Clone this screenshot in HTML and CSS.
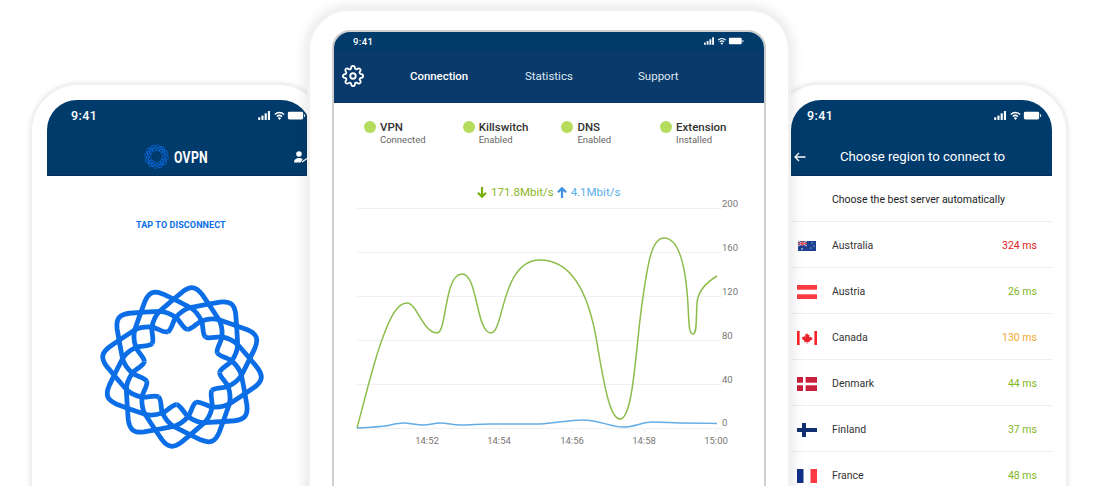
FILE: index.html
```html
<!DOCTYPE html>
<html lang="en">
<head>
<meta charset="utf-8">
<title>OVPN</title>
<link rel="stylesheet" href="styles.css">
</head>
<body>
<svg class="defs" width="0" height="0" aria-hidden="true">
  <defs>
    <path id="strand" d="M0 -80C4.500 -80 7 -77.500 10 -74.500C16 -68 24 -59 30 -52C33 -48 35 -42 35.400 -35.400C35.400 -30 31 -23 32.900 -19M0 -80C-4.500 -80 -7 -77.500 -10 -74.500C-16 -68 -24 -59 -30 -52C-33 -48 -35 -42 -35.400 -35.400C-35.400 -30 -31 -23 -32.900 -19"/>
    <g id="logo">
      <use href="#strand" transform="rotate(8)"/><use href="#strand" transform="rotate(38)"/><use href="#strand" transform="rotate(68)"/><use href="#strand" transform="rotate(98)"/>
      <use href="#strand" transform="rotate(128)"/><use href="#strand" transform="rotate(158)"/><use href="#strand" transform="rotate(188)"/><use href="#strand" transform="rotate(218)"/>
      <use href="#strand" transform="rotate(248)"/><use href="#strand" transform="rotate(278)"/><use href="#strand" transform="rotate(308)"/><use href="#strand" transform="rotate(338)"/>
    </g>
    <g id="status-icons" fill="#fff">
      <rect x="0" y="7" width="2.400" height="3" rx=".5"/><rect x="3.600" y="5" width="2.400" height="5" rx=".5"/><rect x="7.200" y="2.600" width="2.400" height="7.400" rx=".5"/><rect x="10.800" y="0" width="2.400" height="10" rx=".5"/>
      <path d="M18 3.200a8.400 8.400 0 0 1 11.400 0l-1.100 1.200a6.800 6.800 0 0 0-9.200 0zM20.200 5.600a5.200 5.200 0 0 1 7 0l-1.100 1.200a3.600 3.600 0 0 0-4.800 0zM23.700 10l-1.900-2.100a2.600 2.600 0 0 1 3.800 0z"/>
      <rect x="33" y=".8" width="17" height="8.600" rx="1.600"/><rect x="51" y="3.600" width="1.200" height="3" rx=".5"/>
    </g>
  </defs>
</svg>

<main class="stage">
  <section class="phone phone-left">
    <div class="screen">
      <div class="status status-phone">
        <span>9:41</span>
        <svg class="status-svg" viewBox="0 0 53 10"><use href="#status-icons"/></svg>
      </div>
      <header class="brandbar">
        <svg class="brand-logo" viewBox="-84 -84 168 168"><use href="#logo"/></svg>
        <span class="brand-name">OVPN</span>
        <svg class="user-icon" viewBox="0 0 14 12"><circle cx="5" cy="3" r="2.800" fill="#fff"/><path d="M0 11.500c0-3 2-4.600 5-4.600 1.600 0 2.800.4 3.700 1.200L6.600 11.500z" fill="#fff"/><path d="M8 11l5-3.500" stroke="#fff" stroke-width="1.300"/></svg>
      </header>
      <p class="tap">TAP TO DISCONNECT</p>
      <svg class="big-logo" viewBox="-84 -84 168 168"><use href="#logo"/></svg>
    </div>
  </section>

  <section class="phone phone-right">
    <div class="screen">
      <div class="status status-phone">
        <span>9:41</span>
        <svg class="status-svg" viewBox="0 0 53 10"><use href="#status-icons"/></svg>
      </div>
      <header class="titlebar">
        <svg class="back" viewBox="0 0 12 10"><path d="M11.500 5H1M5 1 1 5l4 4" fill="none" stroke="#fff" stroke-width="1.300"/></svg>
        <h1>Choose region to connect to</h1>
      </header>
      <div class="auto">Choose the best server automatically</div>
      <ul class="regions">
        <li class="region">
          <svg class="flag" viewBox="0 0 20 14"><rect x="1" y="2" width="18" height="10" fill="#1c3f8f"/><rect x="1" y="2" width="9" height="5" fill="#3b4d8e"/><path d="M1 2l9 5M10 2 1 7" stroke="#f3c6cc" stroke-width="1"/><path d="M5.500 2v5M1 4.500h9" stroke="#e8505b" stroke-width="1.200"/><circle cx="5" cy="10" r=".8" fill="#fff"/><circle cx="15" cy="4" r=".6" fill="#fff"/><circle cx="17" cy="7" r=".6" fill="#fff"/><circle cx="14" cy="9" r=".6" fill="#fff"/></svg>
          <span class="name">Australia</span><span class="ms red">324 ms</span>
        </li>
        <li class="region">
          <svg class="flag" viewBox="0 0 20 14"><rect width="20" height="14" fill="#fff"/><rect width="20" height="4.700" fill="#fb3a42"/><rect y="9.300" width="20" height="4.700" fill="#fb3a42"/></svg>
          <span class="name">Austria</span><span class="ms green">26 ms</span>
        </li>
        <li class="region">
          <svg class="flag" viewBox="0 0 20 14"><rect width="2.600" height="14" fill="#fb1f26"/><rect x="17.400" width="2.600" height="14" fill="#fb1f26"/><path d="M10 2l1.200 2 1.300-.5-.5 3 1.500-1 .5 1 1.500-.2-.5 1.500.6.500L12.500 10l.2 1.200-2.400-.3V13h-.6v-2.100l-2.400.3.200-1.200L4.900 7.800l.6-.5L5 5.800l1.500.2.500-1 1.500 1-.5-3 1.300.5z" fill="#e8212a"/></svg>
          <span class="name">Canada</span><span class="ms orange">130 ms</span>
        </li>
        <li class="region">
          <svg class="flag" viewBox="0 0 20 14"><rect width="20" height="14" fill="#c8203a"/><rect x="6" width="2.600" height="14" fill="#fff"/><rect y="5.700" width="20" height="2.600" fill="#fff"/></svg>
          <span class="name">Denmark</span><span class="ms green">44 ms</span>
        </li>
        <li class="region">
          <svg class="flag" viewBox="0 0 20 14"><rect x="5" width="4" height="14" fill="#12306f"/><rect y="5" width="20" height="4" fill="#12306f"/></svg>
          <span class="name">Finland</span><span class="ms green">37 ms</span>
        </li>
        <li class="region">
          <svg class="flag" viewBox="0 0 20 14"><rect width="6.500" height="14" fill="#12308a"/><rect x="13.500" width="6.500" height="14" fill="#fb3a42"/></svg>
          <span class="name">France</span><span class="ms green">48 ms</span>
        </li>
      </ul>
    </div>
  </section>

  <section class="tablet">
    <div class="tablet-screen">
      <div class="status status-tablet">
        <span>9:41</span>
        <svg class="status-svg-small" viewBox="0 0 53 10"><use href="#status-icons"/></svg>
      </div>
      <nav class="tabs">
        <svg class="gear" viewBox="0 0 24 24" fill="none" stroke="#fff" stroke-width="2"><circle cx="12" cy="12" r="3"/><path d="M19.400 15a1.650 1.650 0 0 0 .33 1.820l.06.06a2 2 0 0 1 0 2.830 2 2 0 0 1-2.830 0l-.06-.06a1.650 1.650 0 0 0-1.820-.33 1.650 1.650 0 0 0-1 1.510V21a2 2 0 0 1-2 2 2 2 0 0 1-2-2v-.09A1.650 1.650 0 0 0 9 19.400a1.650 1.650 0 0 0-1.820.33l-.06.06a2 2 0 0 1-2.830 0 2 2 0 0 1 0-2.830l.06-.06a1.650 1.650 0 0 0 .33-1.820 1.650 1.650 0 0 0-1.510-1H3a2 2 0 0 1-2-2 2 2 0 0 1 2-2h.09A1.650 1.650 0 0 0 4.600 9a1.650 1.650 0 0 0-.33-1.820l-.06-.06a2 2 0 0 1 0-2.830 2 2 0 0 1 2.830 0l.06.06a1.650 1.650 0 0 0 1.820.33H9a1.650 1.650 0 0 0 1-1.510V3a2 2 0 0 1 2-2 2 2 0 0 1 2 2v.09a1.650 1.650 0 0 0 1 1.510 1.650 1.650 0 0 0 1.820-.33l.06-.06a2 2 0 0 1 2.830 0 2 2 0 0 1 0 2.830l-.06.06a1.650 1.650 0 0 0-.33 1.820V9a1.650 1.650 0 0 0 1.510 1H21a2 2 0 0 1 2 2 2 2 0 0 1-2 2h-.09a1.650 1.650 0 0 0-1.510 1z"/></svg>
        <span class="tab tab-active">Connection</span>
        <span class="tab">Statistics</span>
        <span class="tab">Support</span>
      </nav>
      <div class="states">
        <div class="state"><i class="dot"></i><div><b>VPN</b><small>Connected</small></div></div>
        <div class="state"><i class="dot"></i><div><b>Killswitch</b><small>Enabled</small></div></div>
        <div class="state"><i class="dot"></i><div><b>DNS</b><small>Enabled</small></div></div>
        <div class="state"><i class="dot"></i><div><b>Extension</b><small>Installed</small></div></div>
      </div>
      <div class="rates">
        <svg class="rate-arrow" viewBox="0 0 10 11"><path d="M5 0v9.500M1 5.800 5 9.800l4-4" fill="none" stroke="#78ae0e" stroke-width="2.200"/></svg>
        <span class="rate-down">171.8Mbit/s</span>
        <svg class="rate-arrow" viewBox="0 0 10 11"><path d="M5 11V1.500M1 5.200 5 1.200l4 4" fill="none" stroke="#3f8fe0" stroke-width="2.200"/></svg>
        <span class="rate-up">4.1Mbit/s</span>
      </div>
      <svg class="chart" viewBox="332 195 434 255" width="434" height="255">
        <g class="grid">
          <path d="M357 208.500H722M357 252.500H722M357 296.500H722M357 340.500H722M357 384.500H722M357 428.500H722"/>
          <path d="M427.500 428v4M499.500 428v4M572.500 428v4M644.500 428v4M716.500 428v4"/>
        </g>
        <g class="axis">
          <text x="722" y="207">200</text><text x="722" y="251">160</text><text x="722" y="295">120</text><text x="722" y="339">80</text><text x="722" y="383">40</text><text x="722" y="426">0</text>
          <text x="427" y="443.500" text-anchor="middle">14:52</text><text x="499" y="443.500" text-anchor="middle">14:54</text><text x="572" y="443.500" text-anchor="middle">14:56</text><text x="644" y="443.500" text-anchor="middle">14:58</text><text x="716" y="443.500" text-anchor="middle">15:00</text>
        </g>
        <path class="line-green" d="M357 428C366 395 374 360 383 337C390 318 397 303 407 303C417 303 423 333 437 333C447 333 444 274 462 274C478 274 476 333 491 333C504 333 501 260 540 260C575 260 590 300 597 343C604 385 610 419 620 419C634 419 636 340 643 297C648 262 652 238 664 238C680 238 686 270 688 305C689 325 689 334 693 334C697 334 696 320 697 303C698 290 707 282 717 276"/>
        <path class="line-blue" d="M357 428C370 427 380 427 385 426C392 425 397 423 403 423C410 423 416 425 423 425C430 425 434 423 440 423C448 423 452 425 460 425C470 425 480 424 490 424C510 424 525 424 540 424C555 423 570 420 583 420C600 420 610 427 623 427C635 427 642 422 653 422C665 422 670 423 680 423C695 423 705 423 717 423.500"/>
      </svg>
    </div>
  </section>
</main>
</body>
</html>
```
FILE: styles.css
```css
* { box-sizing: border-box; }
html, body { margin: 0; padding: 0; background: #fff; }
body { font-family: Roboto, "Liberation Sans", sans-serif; }
.defs { position: absolute; }

.stage { position: relative; width: 1099px; height: 486px; overflow: hidden; background: #fff; }

/* Devices sit on a free canvas and overlap each other */
.phone {
  position: absolute; top: 82px; width: 299px; height: 520px;
  background: #fff; border: 3px solid #f1f1f1; border-radius: 50px;
  box-shadow: 0 0 6px rgba(0, 0, 0, .05);
  padding: 15px;
}
.phone-left { left: 29px; }
.phone-right { left: 770px; }
.screen { height: 100%; border-radius: 30px 30px 0 0; overflow: hidden; }
.phone-left .screen { width: 264px; }
.phone-right .screen { width: 261px; margin-left: 3px; }

.tablet {
  position: absolute; left: 307px; top: 8px; width: 484px; height: 560px;
  background: #fff; border: 3px solid #f1f1f1; border-radius: 42px;
  box-shadow: 0 0 14px rgba(0, 0, 0, .13);
  padding: 19px 22px 0;
}
.tablet-screen {
  height: 100%; width: 434px; border: 2px solid #cfcfcf; border-bottom: 0;
  border-radius: 18px 18px 0 0; overflow: hidden; background: #fff;
}

.status { display: flex; justify-content: space-between; align-items: center; background: #013b6b; color: #fff; }
.status-phone { height: 38px; padding: 0 10px 8px 24px; font: 500 12.500px Roboto, sans-serif; letter-spacing: .4px; }
.phone-right .status-phone { padding-left: 16px; }
.phone-left .status-phone { padding-right: 5px; }
.status-svg { width: 48px; height: 9px; flex: none; }
.status-tablet { height: 18px; padding: 0 20px 0 19px; font: 500 9.500px Roboto, sans-serif; letter-spacing: .4px; }
.status-svg-small { width: 40px; height: 8px; flex: none; }

/* Left phone */
.brandbar { height: 38px; background: #013b6b; border-bottom: 1px solid #00305a; display: flex; align-items: center; padding-left: 97px; }
.brand-logo { width: 25px; height: 25px; flex: none; fill: none; stroke: #0d68dc; stroke-width: 6; }
.brand-name { flex: none; width: 44px; margin: 1px 0 0 5px; color: #fff; font: 700 17px Roboto, sans-serif; letter-spacing: .4px; transform: scaleX(.72); transform-origin: left center; }
.user-icon { flex: none; width: 14px; height: 12px; margin-left: 76px; }
.tap { margin: 44px 0 0; padding-left: 89px; color: #0b6ee6; font: 700 9px Roboto, sans-serif; letter-spacing: .1px; line-height: 11px; }
.big-logo { display: block; width: 168px; height: 168px; margin: 52px 0 0 50.500px; fill: none; stroke: #0b6ee6; stroke-width: 4.800; }

/* Right phone */
.titlebar { height: 38px; background: #013b6b; border-bottom: 1px solid #00305a; display: flex; align-items: center; padding-left: 3px; color: #fff; }
.back { flex: none; width: 12px; height: 10px; }
.titlebar h1 { margin: 0 0 0 34px; font: 400 13.200px Roboto, sans-serif; white-space: nowrap; }
.auto { height: 46px; display: flex; align-items: center; padding: 2px 0 0 41px; font: 400 10.500px Roboto, sans-serif; color: #222; border-bottom: 1px solid #eee; }
.regions { list-style: none; margin: 0; padding: 0; }
.region { height: 46px; display: flex; align-items: center; padding: 2px 15px 0 6px; border-bottom: 1px solid #eee; font-size: 10.500px; color: #333; }
.flag { flex: none; width: 20px; height: 14px; }
.name { margin-left: 15px; flex: 1; }
.red { color: #e3211c; }
.green { color: #7fb622; }
.orange { color: #f3a92f; }

/* Tablet */
.tabs { height: 53px; background: #0a3a6b; display: flex; align-items: center; padding: 0 0 1px 8px; color: #dfe7ef; font: 400 11.500px Roboto, sans-serif; }
.gear { flex: none; width: 22px; height: 22px; }
.tab { width: 113px; }
.tab-active { width: 115px; color: #fff; font-size: 11.400px; font-weight: 500; margin-left: 46px; }
.states { display: flex; padding: 17px 0 0 30px; height: 67px; }
.state { width: 98.700px; display: flex; gap: 4px; }
.dot { width: 12px; height: 12px; border-radius: 50%; background: #b5dc5c; margin-top: 1px; flex: none; }
.state b { display: block; font: 500 11.500px/14px Roboto, sans-serif; color: #333; }
.state small { display: block; font: 400 9.500px/12px Roboto, sans-serif; color: #666; }
.rates { display: flex; align-items: center; height: 16px; padding-left: 143px; margin-top: 14px; font-size: 11.500px; gap: 4px; }
.rate-arrow { flex: none; width: 10px; height: 11px; }
.rate-down { color: #8cb51e; margin-right: -1px; }
.rate-up { color: #5aaee8; }
.chart { display: block; margin-top: -5px; margin-left: -2px; }
.grid path { stroke: #f1f1f1; fill: none; }
.axis text { font: 400 9.500px Roboto, sans-serif; fill: #777; }
.line-green { fill: none; stroke: #8cbc4a; stroke-width: 1.500; }
.line-blue { fill: none; stroke: #63ace6; stroke-width: 1.500; }
```
